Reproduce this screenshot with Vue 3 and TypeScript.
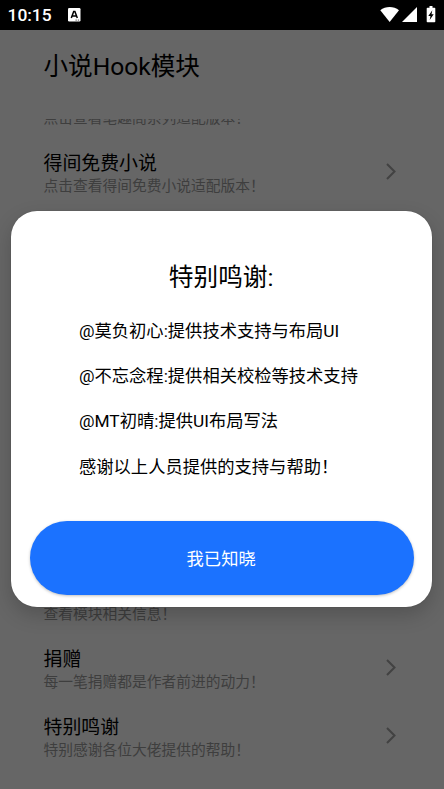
<script setup lang="ts">
interface Entry {
  title?: string
  hint: string
}

const adapters: Entry[] = [
  { hint: '点击查看笔趣阁系列适配版本！' },
  { title: '得间免费小说', hint: '点击查看得间免费小说适配版本！' },
]

const about: Entry[] = [
  { hint: '查看模块相关信息！' },
  { title: '捐赠', hint: '每一笔捐赠都是作者前进的动力！' },
  { title: '特别鸣谢', hint: '特别感谢各位大佬提供的帮助！' },
]

const groups: Entry[][] = [adapters, about]

const credits: string[] = [
  '@莫负初心:提供技术支持与布局UI',
  '@不忘念程:提供相关校检等技术支持',
  '@MT初晴:提供UI布局写法',
  '感谢以上人员提供的支持与帮助！',
]
</script>

<template>
  <div class="screen" lang="zh-CN">
    <header class="status">
      <span class="clock">10:15</span>
      <svg class="ime" width="13" height="14" viewBox="0 0 13 14">
        <rect width="12.5" height="13.5" rx="1.2" fill="#fff" />
        <path d="M3.3 10 5.7 3.6h1.2L9.3 10M4.3 7.9h4" fill="none" stroke="#000" stroke-width="1.5" />
        <path d="M7.5 12.1h1.3M9.8 12.1h1.3" stroke="#555" stroke-width="1" />
      </svg>
      <svg class="signals" width="58" height="18" viewBox="0 0 58 18">
        <path d="M0.3 4.2C5.5-.1 13.700-.1 19 4.200L9.650 16Z" fill="#fff" />
        <path d="M22 16 37 1V16Z" fill="#fff" />
        <path d="M47.500 1.800h2V0h3v1.800h2q.8 0 .8.8v12.900q0 .8-.8.8h-7q-.8 0-.8-.8V2.600q0-.8.800-.8Z" fill="#fff" />
        <path d="M52.300 4.300 48.300 9.900h2.200L49.700 13.900 53.700 8.300H51.500Z" fill="#000" />
      </svg>
    </header>
    <main class="page">
      <h1 class="heading">小说Hook模块</h1>
      <div class="list">
        <section v-for="(group, g) in groups" :key="g" class="group">
          <div v-for="entry in group" :key="entry.hint" class="row">
            <div class="text">
              <div v-if="entry.title" class="title">{{ entry.title }}</div>
              <div class="hint">{{ entry.hint }}</div>
            </div>
            <svg v-if="entry.title" class="chevron" width="10" height="17" viewBox="0 0 10 17">
              <path d="M1 1 8.500 8.500 1 16" fill="none" stroke="#424242" stroke-width="2" />
            </svg>
          </div>
        </section>
      </div>
    </main>
    <div class="dialog" role="dialog">
      <h2 class="thanks">特别鸣谢:</h2>
      <div class="credits">
        <p v-for="line in credits" :key="line" class="credit">{{ line }}</p>
      </div>
      <button class="confirm" type="button">我已知晓</button>
    </div>
  </div>
</template>

<style>
body {
  margin: 0;
  background: #666;
}
</style>

<style scoped>
.screen {
  position: relative;
  display: flex;
  flex-direction: column;
  width: 444px;
  height: 789px;
  overflow: hidden;
  background: #666;
  color: #000;
  font-family: Roboto, "Noto Sans CJK SC", sans-serif;
}
.status {
  display: flex;
  align-items: center;
  flex: none;
  box-sizing: border-box;
  height: 29.500px;
  padding: 0 6px 0 7.500px;
  background: #000;
  color: #fff;
}
.clock {
  width: 60.500px;
  font-size: 17.400px;
  font-weight: 500;
  line-height: 20px;
  padding-top: 1px;
}
.signals {
  margin-left: auto;
}
.page {
  display: flex;
  flex-direction: column;
  flex: 1;
  min-height: 0;
}
.heading {
  flex: none;
  box-sizing: border-box;
  height: 89.500px;
  margin: 0;
  padding: 19px 43.500px 0;
  font-size: 24.600px;
  font-weight: 400;
  line-height: 36px;
}
.list {
  flex: 1;
  min-height: 0;
  overflow: hidden;
}
.group:first-child {
  margin-top: -49px;
}
.group + .group {
  margin-top: 360px;
}
.row {
  display: flex;
  align-items: center;
  justify-content: space-between;
  box-sizing: border-box;
  height: 68px;
  padding: 0 48px 0 43.500px;
}
.text {
  align-self: flex-end;
  padding-bottom: 9px;
}
.title {
  font-size: 18.900px;
  line-height: 24px;
  margin-bottom: -1px;
}
.hint {
  font-size: 14.750px;
  line-height: 22px;
  color: #3e3e3e;
}
.chevron {
  margin-top: -1px;
}
.dialog {
  position: absolute;
  left: 11px;
  top: 210.500px;
  display: flex;
  flex-direction: column;
  box-sizing: border-box;
  width: 421.300px;
  height: 396px;
  padding: 49px 18.500px 12px;
  border-radius: 26px;
  background: #fff;
  box-shadow: 0 0 1px rgba(0, 0, 0, 0.35), 0 8px 20px rgba(0, 0, 0, 0.19);
}
.thanks {
  margin: 0;
  padding-right: 1px;
  font-size: 24.700px;
  font-weight: 400;
  line-height: 36px;
  text-align: center;
}
.credits {
  padding: 13.500px 0 0 49.500px;
}
.credit {
  margin: 0;
  font-size: 17.300px;
  line-height: 45.200px;
  white-space: nowrap;
}
.confirm {
  height: 74px;
  margin-top: auto;
  padding: 0 1px 0 0;
  border: 0;
  border-radius: 37px;
  background: #1b72ff;
  box-shadow: 0 1px 3px rgba(0, 0, 0, 0.25);
  color: #fff;
  font: inherit;
  font-size: 17.300px;
}
</style>
